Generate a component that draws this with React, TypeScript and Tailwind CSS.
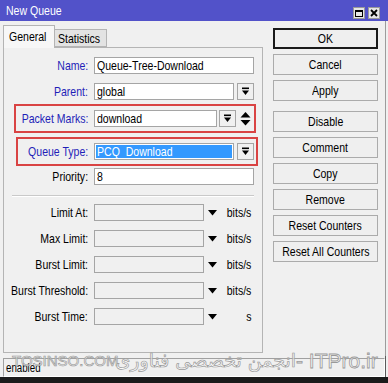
import React from 'react';

const font = "font-['Liberation_Sans',Arial,sans-serif]";

// the reference text is a tall, condensed face; squeeze Liberation Sans to match
function T({ children, o = 'origin-left' }: { children: React.ReactNode; o?: string }) {
  return <span className={`inline-block whitespace-nowrap scale-x-[0.81] ${o}`}>{children}</span>;
}

function DropIcon() {
  return (
    <svg width="9" height="9" viewBox="0 0 9 9">
      <rect x="1" y="0.5" width="7" height="1.6" fill="#000" />
      <polygon points="1,3.5 8,3.5 4.5,8" fill="#000" />
    </svg>
  );
}

function DropButton() {
  return (
    <div className="w-[17px] h-[17px] shrink-0 border border-[#a5a5a5] bg-[#f0f0f0] flex items-center justify-center">
      <DropIcon />
    </div>
  );
}

function Label({ text, blue, w = 'w-[84px]' }: { text: string; blue?: boolean; w?: string }) {
  return (
    <div className={`${w} shrink-0 flex justify-end text-[13px] leading-[17px] ${blue ? 'text-[#1f1fb8]' : 'text-black'}`}>
      <T o="origin-right">{text}</T>
    </div>
  );
}

function Input({ value, w, disabled }: { value?: string; w: string; disabled?: boolean }) {
  return (
    <div
      className={`${w} h-[17px] shrink-0 overflow-hidden border border-[#a5a5a5] pl-[2px] text-[13px] leading-[15px] text-black ${
        disabled ? 'bg-[#f0f0f0]' : 'bg-white'
      }`}
    >
      {value && <T>{value}</T>}
    </div>
  );
}

function LimitRow({ label, unit, first }: { label: string; unit: string; first?: boolean }) {
  return (
    <div className={`flex items-center h-[17px] ${first ? 'mt-[7px]' : 'mt-[9px]'}`}>
      <Label text={label} />
      <div className="w-[6px]" />
      <Input w="w-[110px]" disabled />
      <svg width="9" height="6" viewBox="0 0 9 6" className="ml-[4px] shrink-0">
        <polygon points="0,0 9,0 4.5,5.5" fill="#000" />
      </svg>
      <div className="w-[26px] ml-[8px] flex justify-end text-[13px] leading-[17px]">
        <T o="origin-right">{unit}</T>
      </div>
    </div>
  );
}

const buttons = ['OK', 'Cancel', 'Apply', 'Disable', 'Comment', 'Copy', 'Remove', 'Reset Counters', 'Reset All Counters'];

export default function App() {
  return (
    <div className={`w-[388px] h-[383px] bg-[#f0f0f0] relative overflow-hidden flex flex-col ${font}`}>
      {/* title bar */}
      <div className="h-[21px] bg-[#5252c9] flex items-start shrink-0">
        <div className="text-white text-[13px] leading-[14px] pl-[6px] pt-[4px] flex-1">
          <T>New Queue</T>
        </div>
        <div className="flex gap-[3px] pt-[7px] pr-[8px]">
          <div className="w-[12px] h-[12px] bg-[#e6e6e6] border border-[#9a9a9a] flex items-center justify-center">
            <div className="w-[8px] h-[7px] border border-black border-t-2" />
          </div>
          <div className="w-[12px] h-[12px] bg-[#e6e6e6] border border-[#9a9a9a] flex items-center justify-center">
            <svg width="8" height="8" viewBox="0 0 8 8">
              <path d="M1 1 L7 7 M7 1 L1 7" stroke="#000" strokeWidth="1.8" />
            </svg>
          </div>
        </div>
      </div>

      {/* body */}
      <div className="flex h-[335px] w-[386px] border-r border-[#9c9c9c] shrink-0">
        <div className="pl-[3px] pt-[3px] flex flex-col">
          {/* tabs */}
          <div className="flex items-end h-[23px] text-[13px]">
            <div className="w-[52px] h-[23px] bg-[#f7f7f7] border border-b-0 border-[#b4b4b4] pl-[5px] leading-[22px] relative z-10 -mb-px">
              <T>General</T>
            </div>
            <div className="w-[52px] h-[18px] bg-[#e3e3e3] border border-l-0 border-[#b4b4b4] pl-[3px] leading-[18px]">
              <T>Statistics</T>
            </div>
          </div>
          {/* panel */}
          <div className="w-[260px] h-[306px] border border-[#b4b4b4] bg-[#f0f0f0] flex flex-col">
            <div className="flex items-center h-[17px] mt-[9px]">
              <Label text="Name:" blue />
              <div className="w-[6px]" />
              <Input w="w-[160px]" value="Queue-Tree-Download" />
            </div>
            <div className="flex items-center h-[17px] mt-[9px]">
              <Label text="Parent:" blue />
              <div className="w-[6px]" />
              <Input w="w-[140px]" value="global" />
              <div className="w-[3px]" />
              <DropButton />
            </div>
            <div className="ml-[10px] mt-[4px] w-[242px] h-[29px] border-2 border-[#d94343] flex items-center">
              <Label text="Packet Marks:" blue w="w-[72px]" />
              <div className="w-[6px]" />
              <Input w="w-[123px]" value="download" />
              <div className="w-[2px]" />
              <DropButton />
              <svg width="11" height="16" viewBox="0 0 11 16" className="ml-[4px]">
                <polygon points="5.5,1 10.5,6.5 0.5,6.5" fill="#000" />
                <polygon points="0.5,9 10.5,9 5.5,14.5" fill="#000" />
              </svg>
            </div>
            <div className="ml-[12px] mt-[4px] w-[242px] h-[29px] border-2 border-[#d94343] flex items-center">
              <Label text="Queue Type:" blue w="w-[70px]" />
              <div className="w-[6px]" />
              <div className="w-[140px] h-[17px] border border-[#a5a5a5] bg-white p-px shrink-0">
                <div className="h-full bg-[#3399ff] text-white text-[13px] leading-[13px] pl-px">
                  <T>PCQ_Download</T>
                </div>
              </div>
              <div className="w-[3px]" />
              <DropButton />
            </div>
            <div className="flex items-center h-[17px] mt-[2px]">
              <Label text="Priority:" />
              <div className="w-[6px]" />
              <Input w="w-[160px]" value="8" />
            </div>
            <div className="ml-[8px] mt-[10px] w-[242px] h-[2px] border-t border-[#c9c9c9] border-b border-b-white" />
            <LimitRow label="Limit At:" unit="bits/s" first />
            <LimitRow label="Max Limit:" unit="bits/s" />
            <LimitRow label="Burst Limit:" unit="bits/s" />
            <LimitRow label="Burst Threshold:" unit="bits/s" />
            <LimitRow label="Burst Time:" unit="s" />
          </div>
        </div>

        {/* buttons */}
        <div className="ml-[10px] pt-[7px] flex flex-col">
          {buttons.map((b, i) => (
            <div
              key={b}
              className={`w-[105px] h-[21px] flex items-center justify-center text-[13px] bg-[#efefef] ${
                i === 0 ? 'border-2 border-[#1a1a1a]' : 'border border-[#ababab]'
              } ${i === 0 ? '' : i === 3 ? 'mt-[10px]' : 'mt-[5px]'}`}
            >
              <T o="origin-center">{b}</T>
            </div>
          ))}
        </div>
      </div>

      {/* status bar */}
      <div className="h-[21px] w-[386px] border-r border-[#5a5a5a] pt-[2px] pl-[3px] shrink-0">
        <div className="h-[19px] w-[382px] border border-[#a0a0a0] border-r-white border-b-white text-[12px] leading-[19px] pl-[2px]">
          <T>enabled</T>
        </div>
      </div>
      <div className="h-[6px] bg-[#1b1b1b]" />

      {/* watermark */}
      <div className="absolute left-[12px] top-[352px] text-[15px] leading-[18px] text-white/70 [-webkit-text-stroke:0.7px_#9a9a9a] pointer-events-none">
        TOSINSO.COM
      </div>
      <div
        dir="rtl"
        className="absolute right-[92px] top-[348px] text-[19px] leading-[24px] font-['DejaVu_Sans',sans-serif] text-white/70 [-webkit-text-stroke:0.7px_#9a9a9a] pointer-events-none"
      >
        انجمن تخصصی فناوری
      </div>
      <div className="absolute left-[296px] top-[349px] text-[21px] leading-[24px] text-white/70 [-webkit-text-stroke:0.8px_#9a9a9a] pointer-events-none">
        - ITPro.ir
      </div>
    </div>
  );
}
